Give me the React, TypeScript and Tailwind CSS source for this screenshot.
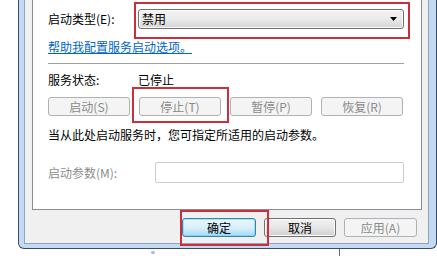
import type { ReactNode } from 'react'

const fontClass = "font-['Noto_Sans_CJK_SC','Liberation_Sans',sans-serif] text-[12px] leading-[14px]"

const disabledBtn = 'flex h-[19px] items-center justify-center rounded-[3px] border border-[#adb2b5] bg-[#f4f4f4] text-[#8b8b8b]'

function WinButton({ children, variant = 'normal', className = '' }: { children: ReactNode; variant?: 'normal' | 'default' | 'disabled'; className?: string }) {
  if (variant === 'disabled') return <div className={`${disabledBtn} ${className}`}>{children}</div>
  if (variant === 'default') {
    return (
      <div className={`flex h-[19px] items-center justify-center rounded-[3px] border border-[#3c7fb1] bg-gradient-to-b from-[#eaf6fd] via-[#d9f0fc] to-[#a7d9f5] text-black shadow-[inset_0_0_0_1px_#48d9fd80] ${className}`}>
        {children}
      </div>
    )
  }
  return (
    <div className={`flex h-[19px] items-center justify-center rounded-[3px] border border-[#707070] bg-gradient-to-b from-[#f2f2f2] via-[#e6e6e6] to-[#cfcfcf] text-black shadow-[inset_0_0_0_1px_#fcfcfc] ${className}`}>
      {children}
    </div>
  )
}

function Annotation({ className }: { className: string }) {
  return <div className={`pointer-events-none absolute border-2 border-[#c9303b] ${className}`} />
}

export default function App() {
  return (
    <div className={`relative h-[256px] w-[437px] overflow-hidden bg-white ${fontClass}`}>
      <div className="ml-[18px] h-[249px] w-[419px] rounded-b-[6px] border-x border-b border-[#3b4d63] bg-[#c4daf2] pl-[5px] pr-[7px]">
        <div className="h-[244px] border-x border-b border-[#8ea4bd] bg-[#f0f0f0] pl-[7px] pr-[6px]">
          <div className="h-[210px] border-x border-b border-[#898c95] bg-white pl-[15px] pr-[17px]">
            <div className="flex items-center pt-[9px]">
              <span className="w-[90px] shrink-0">启动类型(E):</span>
              <div className="flex h-[20px] flex-1 items-center justify-between rounded-[3px] border border-[#707070] bg-gradient-to-b from-[#f2f2f2] via-[#ebebeb] to-[#d3d3d3] pl-[3px] pr-[6px] shadow-[inset_0_0_0_1px_#fcfcfc]">
                <span>禁用</span>
                <svg width="7" height="4" viewBox="0 0 7 4">
                  <path d="M0 0H7L3.5 4Z" fill="#000" />
                </svg>
              </div>
            </div>
            <div className="mt-[11px] w-fit text-[#0066cc] underline">帮助我配置服务启动选项。</div>
            <div className="mt-[9px] h-px bg-[#a0a0a0]" />
            <div className="mt-[9px] flex">
              <span className="w-[90px] shrink-0">服务状态:</span>
              <span>已停止</span>
            </div>
            <div className="mt-[10px] flex gap-[9px]">
              <WinButton variant="disabled" className="w-[82px]">启动(S)</WinButton>
              <WinButton variant="disabled" className="w-[82px]">停止(T)</WinButton>
              <WinButton variant="disabled" className="w-[82px]">暂停(P)</WinButton>
              <WinButton variant="disabled" className="w-[82px]">恢复(R)</WinButton>
            </div>
            <div className="mt-[12px]">当从此处启动服务时，您可指定所适用的启动参数。</div>
            <div className="mt-[20px] flex items-center">
              <span className="w-[107px] shrink-0 text-[#8d8d8d]">启动参数(M):</span>
              <div className="h-[21px] flex-1 rounded-[2px] border border-[#c9cbcf] bg-white" />
            </div>
          </div>
          <div className="mt-[8px] flex justify-end gap-[8px] pr-[5px]">
            <WinButton variant="default" className="w-[74px]">确定</WinButton>
            <WinButton className="w-[72px]">取消</WinButton>
            <WinButton variant="disabled" className="w-[73px]">应用(A)</WinButton>
          </div>
        </div>
      </div>

      <div className="absolute left-[339px] top-[249px] h-[7px] w-px bg-[#6b6b6b]" />
      <div className="absolute left-[151px] top-[251px] h-[3px] w-[4px] rounded-full bg-[#9fc2e6]" />

      <Annotation className="left-[134px] top-[2px] h-[37px] w-[276px]" />
      <Annotation className="left-[132px] top-[87px] h-[36px] w-[97px]" />
      <Annotation className="left-[180px] top-[210px] h-[36px] w-[89px]" />
    </div>
  )
}
